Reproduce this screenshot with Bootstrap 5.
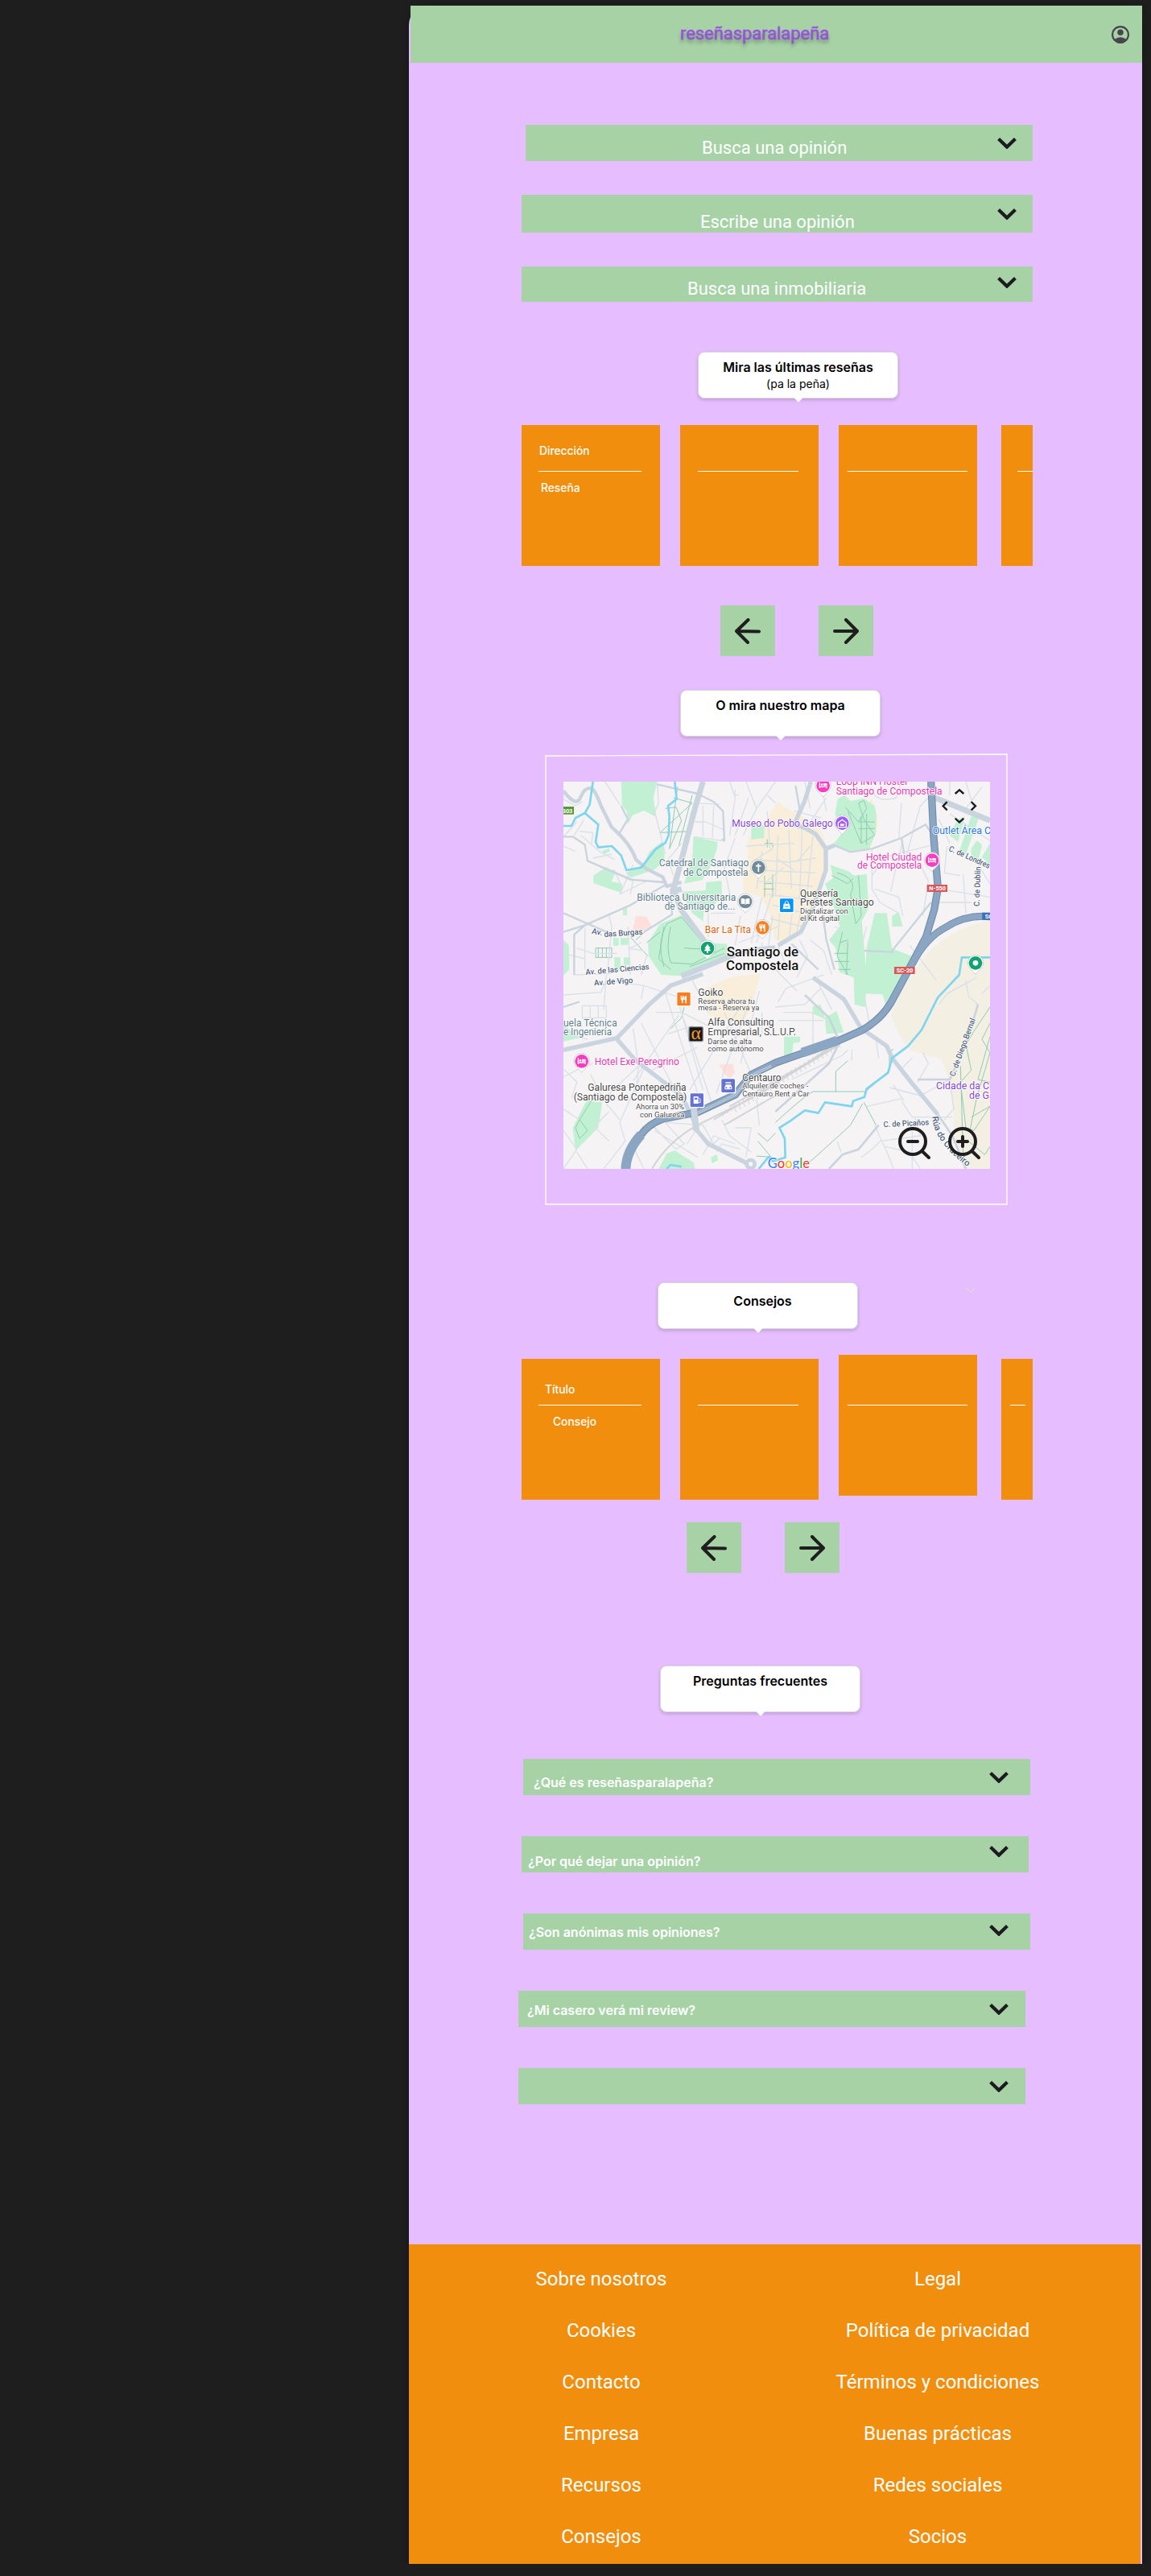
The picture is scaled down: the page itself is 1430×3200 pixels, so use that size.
<!DOCTYPE html>
<html lang="es">
<head>
<meta charset="utf-8">
<meta name="viewport" content="width=device-width, initial-scale=1">
<title>reseñasparalapeña</title>
<link href="https://cdn.jsdelivr.net/npm/bootstrap@5.3.0/dist/css/bootstrap.min.css" rel="stylesheet">
<style>
  body { background: #1e1e1e; font-family: Inter, "Liberation Sans", sans-serif; color: #000; }
  .page { width: 911px; margin: 7px 0 0 508px; height: 3178px; background: #e6beff; border-top-left-radius: 24px; box-shadow: 0 4px 8px rgba(0,0,0,.35); }
  .topbar { height: 71px; margin-left: 2px; padding: 0 16px 0 335px; background: #a6d2a6; }
  .brand { font: 400 22px/26px Roboto, sans-serif; color: #9555d6; letter-spacing: -.06px; -webkit-text-stroke: .8px #b673ee; paint-order: stroke; text-shadow: 0 4px 4px rgba(0,0,0,.35); margin-top: -1px; }
  .bar { background: #a6d2a6; color: #fff; width: 635px; margin-left: 140px; }
  .bar-q { font: 400 22px/26px Roboto, sans-serif; }
  .q1 { height: 45px; width: 630px; margin: 77px 0 42px 145px; padding: 16px 20px 0 219px; }
  .q2 { height: 47px; margin-bottom: 42px; padding: 21px 20px 0 222px; }
  .q3 { height: 44px; padding: 15px 20px 0 206px; }
  .q1 svg { margin-top: 0; } .q2 svg { margin-top: -4px; } .q3 svg { margin-top: -2px; }
  .bubble { position: relative; width: 249px; height: 58px; background: #fff; border: 1px solid #d9d9d9; border-radius: 8px; box-shadow: 0 2px 4px rgba(12,12,13,.18); text-align: center; padding-top: 8px; font-weight: 600; font-size: 16px; line-height: 20px; }
  .bubble::after { content: ""; position: absolute; left: 50%; bottom: -4px; width: 8px; height: 8px; margin-left: -4px; background: #fff; transform: rotate(45deg); }
  .bubble small { display: block; font-size: 14px; font-weight: 400; margin-top: 1px; }
  .b1 { margin: 62px 0 33px 359px; }
  .b2 { margin: 42px 0 22px 337px; }
  .tips-head { margin: 97px 0 37px 309px; }
  .b3 { padding: 12px 0 0 12px; }
  .b4 { margin: 115px 0 58px 312px; }
  .strip { width: 635px; height: 175px; margin-left: 140px; gap: 25px; overflow: hidden; }
  .strip.shifted { overflow: visible; }
  .tile { width: 172px; flex: none; background: #f18e0d; color: #fff; font-size: 13.8px; line-height: 18px; font-weight: 500; }
  .tile hr { margin: 0; opacity: 1; border: 0; height: 1px; background: #fff; }
  .tile:last-child { width: 39px; margin-left: 5px; overflow: hidden; }
  .tile .head { height: 57px; }
  .raised { margin-top: -5px; margin-bottom: 5px; }
  .raised .head { height: 62px; }
  .arrow { width: 68px; height: 63px; background: #a6d2a6; border: 0; padding: 0; }
  .map-frame { position: relative; width: 575px; height: 559px; margin-left: 169px; padding: 34px 0 0 23px; }
  .outline { position: absolute; inset: -1px 0 0 0; }
  .map { display: block; font-family: Roboto, "Liberation Sans", sans-serif; }
  .faq { height: 45px; width: 630px; margin-bottom: 51px; font-size: 16px; font-weight: 600; line-height: 20px; }
  footer { background: #f18e0d; color: #fff; height: 397px; margin-top: 174px; width: 909px; padding: 11px 0 0 30px; font: 400 24px/64px Roboto, sans-serif; text-align: center; }
  footer ul { width: 418px; }
</style>
<script src="https://cdn.jsdelivr.net/npm/bootstrap@5.3.0/dist/js/bootstrap.bundle.min.js"></script>
</head>
<body>
<svg width="0" height="0" class="position-absolute">
  <defs>
    <symbol id="chev" viewBox="0 0 24 14"><path d="M1.6 1.500 12 11.600 22.400 1.500" fill="none" stroke="#1d1b20" stroke-width="4.200"/></symbol>
    <symbol id="left" viewBox="0 0 32 32"><path d="M16.500 2 2 16 16 30M2 16 30 16.400" fill="none" stroke="#1e1e1e" stroke-width="4" stroke-linecap="round" stroke-linejoin="round"/></symbol>
    <symbol id="right" viewBox="0 0 32 32"><path d="M16 2 30 16 16 30M30 16H2" fill="none" stroke="#1e1e1e" stroke-width="4" stroke-linecap="round" stroke-linejoin="round"/></symbol>
  </defs>
</svg>
<div class="page">
  <header class="topbar d-flex align-items-center justify-content-between">
    <div class="brand">reseñasparalapeña</div>
    <svg width="22" height="22" viewBox="2 2 20 20" fill="#49454f"><path d="M5.850 17.100q1.275-.975 2.850-1.537T12 15t3.300.563 2.850 1.537q.875-1.025 1.363-2.325T20 12q0-3.325-2.337-5.662T12 4 6.338 6.338 4 12q0 1.475.488 2.775T5.850 17.100M12 13q-1.475 0-2.487-1.012T8.500 9.500t1.013-2.487T12 6t2.488 1.013T15.500 9.500t-1.012 2.488T12 13m0 9q-2.075 0-3.900-.788t-3.175-2.137-2.137-3.175T2 12t.788-3.900 2.137-3.175T8.100 2.788 12 2t3.900.788 3.175 2.137T21.213 8.100 22 12t-.788 3.900-2.137 3.175-3.175 2.138T12 22"/></svg>
  </header>

  <div class="bar bar-q q1 d-flex justify-content-between"><span>Busca una opinión</span><svg width="24" height="14"><use href="#chev"/></svg></div>
  <div class="bar bar-q q2 d-flex justify-content-between"><span>Escribe una opinión</span><svg width="24" height="14"><use href="#chev"/></svg></div>
  <div class="bar bar-q q3 d-flex justify-content-between"><span>Busca una inmobiliaria</span><svg width="24" height="14"><use href="#chev"/></svg></div>

  <div class="bubble b1">Mira las últimas reseñas<small>(pa la peña)</small></div>
  <div class="strip d-flex">
    <div class="tile"><div class="head" style="padding:23px 0 0 22px">Dirección</div><hr style="margin:0 23px 0 21px"><div style="padding:11px 0 0 24px">Reseña</div></div>
    <div class="tile"><div class="head"></div><hr style="margin:0 25px 0 22px"></div>
    <div class="tile"><div class="head"></div><hr style="margin:0 12px 0 11px"></div>
    <div class="tile"><div class="head"></div><hr style="margin:0 0 0 20px"></div>
  </div>
  <div class="d-flex" style="margin:49px 0 0 387px;gap:54px">
    <button class="arrow" aria-label="Anterior"><svg width="32" height="32"><use href="#left"/></svg></button>
    <button class="arrow" aria-label="Siguiente"><svg width="32" height="32"><use href="#right"/></svg></button>
  </div>

  <div class="bubble b2">O mira nuestro mapa</div>
  <div class="map-frame">
    <svg class="outline" width="575" height="561"><path d="M1 3 574 1V560H1Z" fill="none" stroke="#fff" stroke-width="1.300"/></svg>
    <svg class="map" width="530" height="481" viewBox="0 0 1590 1443">
      <defs>
        <symbol id="pin" viewBox="-32 -32 64 78" overflow="visible"><path d="M0 42C-7 30-29 20-29-1A29 29 0 0 1 29-1C29 20 7 30 0 42Z" fill="#fff" stroke="#b8bcc2" stroke-width="2"/><circle r="25" fill="currentColor"/></symbol>
        <g id="bed" fill="#fff"><path d="M-15-11h4V4h26v7h-4V8h-22v3h-4z"/><circle cx="-5" cy="-2" r="4"/><path d="M1-7h10q4 0 4 4v5H1z"/></g>
        <g id="fork" fill="#fff"><path d="M-12-13h3v8h2v-8h3v8h2v-8h3v10q0 5-4 6v11h-5V4q-4-1-4-6zM10-14V15H5V3H2V-5q0-7 8-9z"/></g>
      </defs>
      <rect width="1590" height="1443" fill="#f5f3f4"/>
      <!-- built-up and park areas -->
      <g fill="#f8eed9">
        <path d="M690 210 735 190 775 110 800 75 850 110 900 135 960 180 985 250 975 330 960 400 930 470 885 560 830 600 790 590 770 500 740 430 672 410 668 350 685 300Z"/>
        <path d="M520 775 620 730 735 715 700 850 660 905 540 870Z"/>
        <path d="M1590 515Q1430 550 1340 660L1260 780 1220 870 1260 960 1300 1005 1410 1035 1435 1110 1450 1200 1460 1340 1490 1443H1590Z" fill="#f4efe3"/>
        <path d="M1000 235 1085 170 1150 60 1166 120 1175 160 1140 255 1060 262Z"/>
      </g>
      <g fill="#c2f0d3">
        <path d="M215 0H350L335 60 346 132 300 108 258 125 240 160 236 110 218 86Z"/>
        <path d="M370 222 378 295 335 330 250 358 233 340 298 310 320 262Z"/>
        <path d="M112 350 160 318 194 340 178 372 220 380 217 415 160 395 112 378ZM145 258 170 248 173 260 150 270Z"/>
        <path d="M485 205 575 225 572 250 552 310 518 366 450 380 480 290Z"/>
        <path d="M440 410 530 405 532 375 590 370 590 430 560 460 525 475 520 520 480 490Z"/>
        <path d="M315 600 360 530 440 497 480 535 530 600 610 605 610 660 460 725 365 720 318 650Z"/>
        <path d="M700 150 750 165 747 210 700 215ZM0 590 20 610 22 700 0 722ZM222 470h15v28h-15zM186 583h20v28h-20zM213 583h28v25h-28zM190 655h22v50h-22zM225 655h24v28h-24z"/>
        <path d="M1012 120 1022 65 1048 50 1070 72 1120 62 1160 90 1166 120 1165 190 1140 248 1070 260 1005 235 1040 190Z"/>
        <path d="M995 310 1065 335 1082 350 1130 345 1138 470 1112 520 1130 720 1125 840 1085 830 1082 730 1030 710 1015 620 990 590 1030 540 1000 440 975 380 1005 360Z"/>
        <path d="M1160 490 1205 490 1225 622 1310 655 1270 722 1200 830 1190 793 1122 790 1130 620ZM1225 500 1250 485 1265 540 1225 540Z"/>
        <path d="M928 838 958 830 975 880 1018 855 1045 935 980 940 975 885 930 865ZM822 950h60v20l-25 5-5 45h-30z"/>
        <path d="M0 905 60 955 0 968ZM35 1290 85 1190 145 1195 130 1290 45 1375ZM355 1443 385 1385 415 1375 485 1420 490 1443ZM550 1400 573 1388 575 1412 553 1422Z"/>
        <path d="M1440 200 1470 140 1495 130 1490 155 1470 225ZM1475 260 1520 130 1550 130 1500 270ZM1520 250 1540 220 1560 235 1545 300 1520 290ZM1560 280 1590 230V315Z"/>
      </g>
      <path d="M258 550 270 500 310 503 330 540 290 558ZM580 1055 630 1050 640 1085 620 1107 600 1090Z" fill="#fde0dc"/>
      <!-- park paths -->
      <g fill="none" stroke="#8fcbb2" stroke-width="3">
        <path d="M395 250 440 145 420 95 380 100M480 50 430 240M410 60 480 80 360 190 470 185M425 20 395 250"/>
        <path d="M375 690Q345 600 385 530L440 505 520 600M375 540 355 660 400 700M400 540Q380 620 400 675L480 680 600 620M470 690 600 640M450 620 530 625M310 600 360 560"/>
        <path d="M1050 95 1100 150 1130 100 1120 70 1100 80 1120 140 1160 200 1110 230 1060 110M1100 150H1160M1100 175H1160M1110 130V230M1130 120V235"/>
        <path d="M1020 340Q1100 360 1070 420L1090 530 1110 500 1100 350M1000 350 1060 380 1080 360M1040 560 1020 650 1060 720M1010 640H1060M1010 670H1065M1025 700H1070M1030 600 1060 590 1055 720"/>
        <path d="M120 620H180V655H120ZM130 620V655M145 620V655M160 620V655M270 590 315 550 M250 580 315 650M760 215V245M750 230H780V245M750 350V430M780 345V430M750 380H780M745 400H785"/>
        <path d="M400 920 430 890 440 880 450 840M60 1330 90 1300 60 1260 45 1290ZM60 1260 110 1180"/>
        <path d="M790 1270Q900 1170 930 1155H1125L1155 1130 1215 1075V1020Q1225 990 1230 1000M1015 1155V1080L1060 1040M1120 1195 1165 1280M1115 1200 1070 1280 960 1380 890 1443M725 1310 760 1340 790 1310M725 1340 775 1400 720 1395"/>
        <path d="M1590 840 1530 930 1500 980 1520 1075 1480 1120 1500 1290 1530 1300 1590 1210M1590 900 1560 960 1590 1010 1540 1180 1515 1300M1480 1060 1490 1400M1510 1340 1570 1390 1590 1360M1590 950 1545 1110 1590 1120M1520 1250 1590 1210"/>
      </g>
      <!-- minor streets -->
      <g fill="none" stroke="#d8e0e8" stroke-width="4" stroke-linejoin="round">
        <path d="M0 65 45 90 70 75M155 0 210 85M60 185 110 190 105 230M50 150 0 205M65 200 135 260 190 290M110 285 180 270M90 295 260 365 250 420M260 310 210 420 310 370M130 340 190 330 220 400M0 240 45 260M75 145 40 200"/>
        <path d="M350 5 355 80 340 110 380 270M440 230 390 290 410 350M500 80 580 85M490 150H530L600 180M490 205 590 220M520 90V205M560 90 555 210M620 0 640 60 620 200M640 30V50H655M680 0 720 100 790 0M720 100 670 200M760 50 790 80M690 60 640 200"/>
        <path d="M620 420 600 320 640 210M780 410 720 600M740 430 700 600M660 500 640 610M550 490H640M540 490V580M655 600 800 540M740 600V640M780 500 760 640M700 640 800 620"/>
        <path d="M170 500 180 540 165 700M80 545V700M240 540 250 720M50 620 110 640H200M290 600 250 620M0 640 80 660M40 720 180 715M310 650 290 720M240 620 300 630"/>
        <path d="M680 240 860 230M760 110 770 250M710 290 840 300 940 285M735 330 940 340M720 370 930 390M760 420 920 440M740 260 720 400M800 200 790 420M840 180 850 400M890 160 880 440M930 200 910 400M780 460 900 490M770 510 890 540M810 420 800 590M860 430 840 590M900 410 870 560M700 300 780 250M800 290 860 330M870 300 920 240M760 370 820 320"/>
        <path d="M900 0 920 100M960 0 980 110M860 110 960 135M980 60 920 150M1155 40Q1170 80 1240 60L1260 0M1250 210 1260 80M1280 270 1330 90 1360 60M1150 255V400L1180 450 1250 490M1220 410 1240 320 1265 220M1150 350 1200 280 1400 230M1330 310 1360 370 1340 500M1160 400 1250 430 1265 500"/>
        <path d="M1430 240 1420 340 1480 350M1400 400 1590 430M1440 0V50M1500 0 1530 100M1560 20 1500 100M1440 120 1590 220M1400 140 1440 230M1490 345 1500 490M1540 300 1590 380M1400 450H1520"/>
        <path d="M920 590 970 630 1000 720M880 590 910 650 870 730M1010 540 1060 560M1060 590 1110 720M1130 540 1110 620M800 610 830 690M940 730 1000 850"/>
        <path d="M0 795 140 785 160 740 240 750M160 720 150 850M70 835H160V880H70ZM100 835V880M130 835V880M160 740 300 760 290 810M345 860H440L540 910M430 870 260 1115M290 900 410 1140M260 920 280 1060 270 1160M300 760 420 800 440 860 520 1150M440 860 550 1190M390 940 480 910 500 960M380 790 500 1160M600 860 700 1090M480 740 540 860M700 800 570 1160M740 860V940M730 780 660 1050M0 940 90 960M500 990 320 1080M670 820 470 1150"/>
        <path d="M820 860H930V1000M800 890H970M800 820 830 770 970 720M790 700 870 780M1120 790 1140 900M1290 610 1390 740M960 770 900 830 790 840M850 1110 1040 1020 1060 1000M1165 960 1175 1030M1075 1000V1040"/>
        <path d="M0 1100 60 1070 110 1050M100 1090 160 1200 210 1260M0 1070 50 1120 30 1180M280 1060 130 1200M300 1070 250 1180 210 1270 230 1340 150 1443M170 1230 110 1290M0 1220 60 1260M0 1300 50 1370 0 1443M50 1380 90 1443M110 1280 170 1340M320 1270 420 1370 450 1350 380 1270M340 1300 500 1400M380 1270 520 1280 560 1350 580 1330M260 1360 300 1443M500 1290 460 1350M520 1390 560 1320 640 1350M640 1290 700 1290 680 1400M590 1260 620 1320 700 1380M720 1180 730 1280M570 1380 590 1350 660 1370"/>
        <path d="M1215 1140 1330 1170 1440 1110M1260 1070 1300 1030M1320 1120 1360 1050 1340 1010M1270 1190 1230 1130M1265 1180 1130 1210M1260 1190 1300 1250 1450 1250M1160 1280 1210 1390 1230 1443M1180 1340 1330 1320 1310 1250M1180 1340 1150 1370 1110 1400M1200 1360 1290 1380 1330 1443M1300 1280V1443M1020 1340 1035 1380M1440 1110 1455 1220 1420 1260M1400 830 1430 790 1540 730M1500 740 1510 800 1545 830M1590 760 1560 790"/>
      </g>
      <!-- secondary streets -->
      <g fill="none" stroke="#c9d4de" stroke-linejoin="round">
        <path d="M0 205H35L80 235 90 295 250 365 375 375M0 560 80 535 250 460 380 385M80 535 40 570V720M0 490 160 560M215 90 240 140 210 190M300 560 405 495 400 400M350 10 500 45 560 75 595 110 600 220 590 215M1005 235 1070 262 1150 250 1260 210 1350 160 1380 205M1260 210 1270 270M865 15 880 100 860 160M0 840 60 820M850 605 950 700M1225 630 1370 450M1122 630 1230 635M960 440 980 590 1010 700" stroke-width="7"/>
        <path d="M0 35Q50 100 65 55 80 20 105 25 120 35 140 90L180 170Q250 230 270 290L310 325 370 355 385 390 440 375" stroke-width="13"/>
        <path d="M922 0 900 70 860 160 900 172 940 195 978 250 978 330 930 470 885 560 800 610M1010 238 978 250" stroke-width="16"/>
        <path d="M520 0 490 100 430 330 410 400 440 480 530 600 560 640M440 725 600 660 660 635 790 620M440 400 400 410M1385 60 1590 145" stroke-width="21"/>
        <path d="M520 717 400 760 320 830 200 955 0 1000M195 955 270 1040 440 1170 500 1290M930 730 1045 810 1110 920 1205 985 1225 1030 1300 1125 1395 1240M490 1290 540 1350 690 1425" stroke-width="16"/>
        <path d="M900 795 990 880 1025 960M790 1230 990 1050 1025 980M1545 830 1510 950 1440 1110 1320 1110M1175 1280 1100 1370 1040 1390 990 1443M1395 1240 1450 1320 1500 1443" stroke-width="8"/>
        <circle cx="698" cy="1425" r="15" stroke-width="14" fill="#f5f3f4"/>
      </g>
      <!-- railway -->
      <g fill="none" stroke="#d2d3d6"><path d="M330 1443Q390 1340 500 1280L740 1160 1040 960M560 1260 1020 985M620 1210 1030 980M600 1280 790 1170" stroke-width="6"/><path d="M590 1240 1020 980M640 1225 1030 985" stroke-width="16" stroke-dasharray="3 16"/></g>
      <!-- water -->
      <g fill="none" stroke="#7fd5ee" stroke-width="8" stroke-linejoin="round">
        <path d="M110 0 98 85 80 117 130 160 120 225 130 245 180 240 215 275 235 330 290 320 345 250 380 228 392 200 395 130 390 90 422 65 415 0M80 117 45 135 30 165 0 165"/>
        <path d="M1590 655H1485L1475 720 1395 805 1335 925 1285 985 1225 1030 1210 1085 1130 1145 1122 1175 1080 1190 1075 1210 975 1195 950 1235 900 1225 845 1265 805 1290 825 1330 827 1400 780 1415 765 1398 728 1443M385 1443 400 1428 440 1435"/>
      </g>
      <!-- ring road -->
      <g fill="none" stroke-linejoin="round">
        <path d="M1370 0 1380 207 1396 397 1382 477 1352 577 1275 723 1220 825Q1180 890 1110 928L1022 967 892 1012 792 1047 700 1092 640 1167 500 1232 370 1257Q320 1275 290 1315 235 1375 232 1443" stroke="#748fae" stroke-width="28"/>
        <path d="M1590 503Q1500 495 1430 540 1350 580 1300 680" stroke="#748fae" stroke-width="27"/>
        <path d="M1370 0 1380 207 1396 397 1382 477 1352 577 1275 723 1220 825Q1180 890 1110 928L1022 967 892 1012 792 1047 700 1092 640 1167 500 1232 370 1257Q320 1275 290 1315 235 1375 232 1443M1590 503Q1500 495 1430 540 1350 580 1300 680" stroke="#8ba6c3" stroke-width="21"/>
        <path d="M232 1443Q235 1375 290 1315M1020 965 890 1010" stroke="#8ba6c3" stroke-width="36"/>
        <path d="M775 1060 700 1095 640 1167 500 1235" stroke="#bccbdc" stroke-width="10"/><path d="M775 1060 700 1095 640 1167 500 1235" stroke="#7d97b5" stroke-width="2"/>
        <path d="M485 1210 495 1300" stroke="#c9d4de" stroke-width="24"/>
      </g>
      <!-- road shields -->
      <g font-weight="700" font-size="22" fill="#fff">
        <path d="M-5 93H39V122H-5Z" fill="#579838"/><text x="-4" y="116">303</text>
        <path d="M1355 384H1431V411H1355Z" fill="#d9595b"/><text x="1363" y="405" textLength="62">N-550</text>
        <path d="M1233 690H1310V717H1233Z" fill="#d9595b"/><text x="1241" y="712" textLength="62">SC-20</text>
        <path d="M1561 488H1600V515H1561Z" fill="#3a6cc0"/><text x="1571" y="510">SC</text>
      </g>
      <!-- labels -->
      <g font-size="37" stroke="#fff" stroke-width="5" paint-order="stroke" stroke-linejoin="round">
        <g fill="#ea35b4">
          <text x="1016" y="13" textLength="266">Loop INN Hostel</text><text x="1016" y="48" textLength="396">Santiago de Compostela</text>
          <text x="1128" y="294" textLength="208">Hotel Ciudad</text><text x="1095" y="324" textLength="241">de Compostela</text>
          <text x="116" y="1056" textLength="316">Hotel Exe Peregrino</text>
        </g>
        <g fill="#8547d6">
          <text x="628" y="168" textLength="376">Museo do Pobo Galego</text>
          <text x="1389" y="1147">Cidade da Cultura</text><text x="1512" y="1181">de Galicia</text>
        </g>
        <g fill="#607d8b">
          <text x="356" y="314" textLength="335">Catedral de Santiago</text><text x="446" y="350" textLength="243">de Compostela</text>
          <text x="274" y="445" textLength="369">Biblioteca Universitaria</text><text x="377" y="478" textLength="263">de Santiago de...</text>
          <text x="0" y="911" textLength="200">uela Técnica</text><text x="0" y="944" textLength="180">e Ingeniería</text>
        </g>
        <text x="527" y="563" textLength="172" fill="#df650c">Bar La Tita</text>
        <text x="1376" y="196" fill="#2877dc">Outlet Área Central</text>
        <g fill="#4a4a4a">
          <text x="882" y="428" textLength="142">Quesería</text><text x="882" y="462" textLength="275">Prestes Santiago</text>
          <text x="502" y="798" textLength="93">Goiko</text>
          <text x="538" y="909" textLength="247">Alfa Consulting</text><text x="538" y="945" textLength="329">Empresarial, S.L.U.P.</text>
          <text x="667" y="1117" textLength="145">Centauro</text>
          <text x="91" y="1151" textLength="367">Galuresa Pontepedriña</text><text x="38" y="1188" textLength="422">(Santiago de Compostela)</text>
          <g font-size="29">
            <text x="882" y="492" textLength="179">Digitalizar con</text><text x="882" y="520" textLength="147">el Kit digital</text>
            <text x="502" y="828" textLength="211">Reserva ahora tu</text><text x="502" y="851" textLength="228">mesa - Reserva ya</text>
            <text x="538" y="979" textLength="164">Darse de alta</text><text x="538" y="1006" textLength="208">como autónomo</text>
            <text x="667" y="1144" textLength="246">Alquiler de coches -</text><text x="667" y="1174" textLength="249">Centauro Rent a Car</text>
            <text x="270" y="1222" textLength="180">Ahorra un 30%</text><text x="285" y="1250" textLength="166">con Galuresa</text>
          </g>
        </g>
        <g fill="#111" font-weight="500" font-size="48"><text x="608" y="651" textLength="268">Santiago de</text><text x="606" y="703" textLength="271">Compostela</text></g>
        <g fill="#52647c" font-size="30" font-weight="500">
          <text transform="translate(104 566) rotate(10)">Av.</text><text transform="translate(152 579) rotate(-4)" textLength="144">das Burgas</text>
          <text transform="translate(83 720) rotate(-5)" textLength="238">Av. de las Ciencias</text><text transform="translate(115 760) rotate(-4)" textLength="145">Av. de Vigo</text>
          <text transform="translate(1434 257) rotate(24)" textLength="165">C. de Londres</text>
          <text transform="translate(1550 465) rotate(-88)" textLength="148">C. de Dublín</text>
          <text transform="translate(1458 1100) rotate(-70)" textLength="228">C. de Diego Bernal</text>
          <text transform="translate(1193 1288) rotate(-3)" textLength="170">C. de Picaños</text>
          <path id="rua" d="M1375 1248Q1378 1350 1535 1455" fill="none" stroke="none"/><text font-size="33"><textPath href="#rua">Rúa do Cruceiro</textPath></text>
        </g>
      </g>
      <!-- place markers -->
      <g color="#fa3cc0"><use href="#pin" x="-32" y="-32" width="64" height="78" transform="translate(968 15)"/><use href="#bed" transform="translate(968 13)"/>
        <use href="#pin" x="-32" y="-32" width="64" height="78" transform="translate(1374 293)"/><use href="#bed" transform="translate(1374 292)"/>
        <use href="#pin" x="-32" y="-32" width="64" height="78" transform="translate(68 1042)"/><use href="#bed" transform="translate(68 1041)"/></g>
      <g color="#a45cf5"><use href="#pin" x="-32" y="-32" width="64" height="78" transform="translate(1039 155)"/><path d="M1024 153 1039 142 1054 153V170H1024Z" fill="none" stroke="#fff" stroke-width="4"/><path d="M1032 157h14v8h-14z" fill="#fff"/></g>
      <g color="#718c98"><use href="#pin" x="-32" y="-32" width="64" height="78" transform="translate(727 320)"/><path d="M727 305V336M717 314H737" stroke="#fff" stroke-width="5"/>
        <use href="#pin" x="-32" y="-32" width="64" height="78" transform="translate(678 447)"/><path d="M662 436Q671 434 677 438V458Q671 454 662 456ZM694 436Q685 434 679 438V458Q685 454 694 456Z" fill="#fff"/></g>
      <g color="#f98120"><use href="#pin" x="-32" y="-32" width="64" height="78" transform="translate(742 544)"/><use href="#fork" transform="translate(742 544)"/></g>
      <g color="#10a36f"><use href="#pin" x="-32" y="-32" width="64" height="78" transform="translate(537 621)"/><path d="M537 605 548 621H543L550 631H540V638H534V631H524L531 621H526Z" fill="#fff"/>
        <use href="#pin" x="-32" y="-32" width="64" height="78" transform="translate(1536 676)"/><circle cx="1536" cy="676" r="10" fill="#fff"/></g>
      <g stroke="#fff" stroke-width="4">
        <rect x="805" y="434" width="54" height="54" rx="6" fill="#0794fb"/><rect x="422" y="783" width="53" height="54" rx="6" fill="#f97d20"/>
        <rect x="468" y="914" width="52" height="54" rx="5" fill="#171717" stroke="#8f9298"/>
        <rect x="587" y="1106" width="54" height="54" rx="6" fill="#6471d5"/><rect x="471" y="1160" width="53" height="54" rx="6" fill="#6471d5"/>
      </g>
      <path d="M821 455H843L846 474H818Z" fill="#fff"/><path d="M826 456V450Q832 440 838 450V456" fill="none" stroke="#fff" stroke-width="3"/><path d="M826 463Q832 471 838 463" fill="none" stroke="#0794fb" stroke-width="3"/>
      <use href="#fork" transform="translate(449 811)"/>
      <text x="494" y="959" text-anchor="middle" font-size="70" font-family="Liberation Serif, serif" fill="#f6992b">α</text>
      <g fill="#fff"><path d="M485 1173H503V1200H485Z"/><path d="M505 1178 510 1184V1196H504" fill="none" stroke="#fff" stroke-width="3"/><path d="M604 1120H625V1124H604ZM605 1129H624L628 1138V1147H601V1138Z"/></g><path d="M489 1178H499V1185H489Z" fill="#6471d5"/><circle cx="607" cy="1141" r="3" fill="#6471d5"/><circle cx="622" cy="1141" r="3" fill="#6471d5"/>
      <text x="761" y="1441" font-size="54" font-weight="500" textLength="157" stroke="#fff" stroke-width="5" paint-order="stroke" font-family="Lato, sans-serif"><tspan fill="#4285f4">G</tspan><tspan fill="#ea4335">o</tspan><tspan fill="#fbbc05">o</tspan><tspan fill="#4285f4">g</tspan><tspan fill="#34a853">l</tspan><tspan fill="#ea4335">e</tspan></text>
      <!-- pan and zoom controls -->
      <g fill="none" stroke="#1d1b20" stroke-width="7"><path d="M1460 45 1476 31 1492 45M1460 137 1476 151 1492 137M1430 75 1415 91 1430 106M1520 75 1536 91 1520 106"/></g>
      <g fill="none" stroke="#1e1e1e" stroke-width="12" stroke-linecap="round"><circle cx="1302" cy="1341" r="48"/><path d="M1284 1341H1320M1337 1377 1362 1401"/><circle cx="1488" cy="1341" r="48"/><path d="M1470 1341H1506M1488 1323V1359M1523 1377 1548 1401"/></g>
    </svg>
  </div>

  <div class="tips-head d-flex">
    <div class="bubble b3">Consejos</div>
    <svg width="12" height="8" viewBox="0 0 12 8" style="margin:6px 0 0 134px"><path d="M.5 1 6 6.500 11.500 1" fill="none" stroke="#d9d9d9" stroke-width="1.200"/></svg>
  </div>
  <div class="strip shifted d-flex">
    <div class="tile"><div class="head" style="padding:29px 0 0 29px">Título</div><hr style="margin:0 23px 0 21px"><div style="padding:11px 0 0 39px">Consejo</div></div>
    <div class="tile"><div class="head"></div><hr style="margin:0 25px 0 22px"></div>
    <div class="tile raised"><div class="head"></div><hr style="margin:0 12px 0 11px"></div>
    <div class="tile"><div class="head"></div><hr style="margin:0 9px 0 11px"></div>
  </div>
  <div class="d-flex" style="margin:28px 0 0 345px;gap:54px">
    <button class="arrow" aria-label="Anterior"><svg width="32" height="32"><use href="#left"/></svg></button>
    <button class="arrow" aria-label="Siguiente"><svg width="32" height="32"><use href="#right"/></svg></button>
  </div>

  <div class="bubble b4">Preguntas frecuentes</div>
  <div class="bar faq d-flex justify-content-between" style="margin-left:142px;padding:19px 27px 0 13px"><span>¿Qué es reseñasparalapeña?</span><svg width="24" height="14" style="margin-top:-3px"><use href="#chev"/></svg></div>
  <div class="bar faq d-flex justify-content-between" style="padding:21px 25px 0 8px"><span>¿Por qué dejar una opinión?</span><svg width="24" height="14" style="margin-top:-9px"><use href="#chev"/></svg></div>
  <div class="bar faq d-flex justify-content-between" style="margin-left:142px;padding:13px 27px 0 7px"><span>¿Son anónimas mis opiniones?</span><svg width="24" height="14" style="margin-top:1px"><use href="#chev"/></svg></div>
  <div class="bar faq d-flex justify-content-between" style="margin-left:136px;padding:14px 21px 0 11px"><span>¿Mi casero verá mi review?</span><svg width="24" height="14" style="margin-top:2px"><use href="#chev"/></svg></div>
  <div class="bar faq d-flex justify-content-end mb-0" style="margin-left:136px;padding:16px 21px 0 0"><svg width="24" height="14"><use href="#chev"/></svg></div>

  <footer class="d-flex">
    <ul class="list-unstyled mb-0"><li>Sobre nosotros</li><li>Cookies</li><li>Contacto</li><li>Empresa</li><li>Recursos</li><li>Consejos</li></ul>
    <ul class="list-unstyled mb-0"><li>Legal</li><li>Política de privacidad</li><li>Términos y condiciones</li><li>Buenas prácticas</li><li>Redes sociales</li><li>Socios</li></ul>
  </footer>
</div>
<script>
  // Map labels are fitted to their plotted width by scaling the glyphs
  document.querySelectorAll('.map text[textLength]').forEach(t => t.setAttribute('lengthAdjust', 'spacingAndGlyphs'));
</script>
</body>
</html>
